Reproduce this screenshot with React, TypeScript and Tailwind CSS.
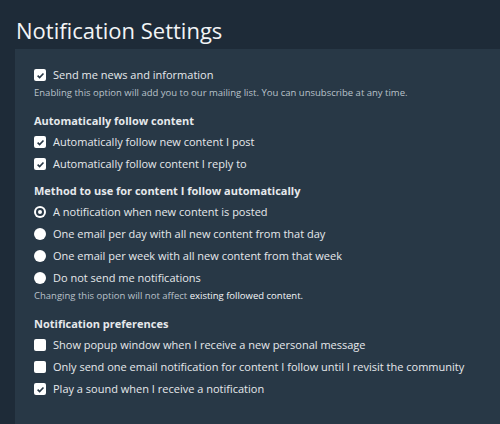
import React from 'react';

const Check = ({ checked }: { checked: boolean }) => (
  <span className="w-3 h-3 rounded-[2px] bg-white flex items-center justify-center shrink-0">
    {checked && (
      <svg width="9" height="9" viewBox="0 0 10 10">
        <path d="M1.8 5.2 L4 7.3 L8.3 2.7" fill="none" stroke="#283846" strokeWidth="1.8" />
      </svg>
    )}
  </span>
);

const Radio = ({ checked }: { checked: boolean }) => (
  <span className="w-3 h-3 rounded-full bg-white flex items-center justify-center shrink-0">
    {checked && <span className="w-[8px] h-[8px] rounded-full border-2 border-[#283846] bg-white" />}
  </span>
);

const Row = ({ kind, checked, label }: { kind: 'check' | 'radio'; checked: boolean; label: string }) => (
  <div className="h-[22px] flex items-center gap-[7px] text-[11px] text-[#e6e9ec] whitespace-nowrap">
    {kind === 'check' ? <Check checked={checked} /> : <Radio checked={checked} />}
    <span>{label}</span>
  </div>
);

const Heading = ({ children, className = '' }: { children: React.ReactNode; className?: string }) => (
  <div className={`h-[20px] flex items-center text-[11px] font-bold text-[#e6e9ec] ${className}`}>{children}</div>
);

export default function App() {
  return (
    <div className="w-[500px] h-[424px] bg-[#1e2b38] flex flex-col overflow-hidden" style={{ fontFamily: '"Open Sans", sans-serif' }}>
      <div className="h-[49px] flex items-center pl-4 pt-[12px] text-[22px] text-[#f2f4f6] shrink-0">Notification Settings</div>
      <div className="ml-[15px] flex-1 bg-[#283846] pt-[15px] pl-[19px]">
        <Row kind="check" checked label="Send me news and information" />
        <div className="h-[14px] flex items-center text-[9.5px] text-[#b9c2ca] whitespace-nowrap">
          Enabling this option will add you to our mailing list. You can unsubscribe at any time.
        </div>

        <Heading className="mt-[11px]">Automatically follow content</Heading>
        <Row kind="check" checked label="Automatically follow new content I post" />
        <Row kind="check" checked label="Automatically follow content I reply to" />

        <Heading className="mt-[6px]">Method to use for content I follow automatically</Heading>
        <Row kind="radio" checked label="A notification when new content is posted" />
        <Row kind="radio" checked={false} label="One email per day with all new content from that day" />
        <Row kind="radio" checked={false} label="One email per week with all new content from that week" />
        <Row kind="radio" checked={false} label="Do not send me notifications" />
        <div className="h-[14px] flex items-center text-[9.5px] text-[#b9c2ca] whitespace-nowrap">
          Changing this option will not affect&nbsp;<span className="text-[#f4f6f8]">existing followed content.</span>
        </div>

        <Heading className="mt-[11px]">Notification preferences</Heading>
        <Row kind="check" checked={false} label="Show popup window when I receive a new personal message" />
        <Row kind="check" checked={false} label="Only send one email notification for content I follow until I revisit the community" />
        <Row kind="check" checked label="Play a sound when I receive a notification" />
      </div>
    </div>
  );
}
